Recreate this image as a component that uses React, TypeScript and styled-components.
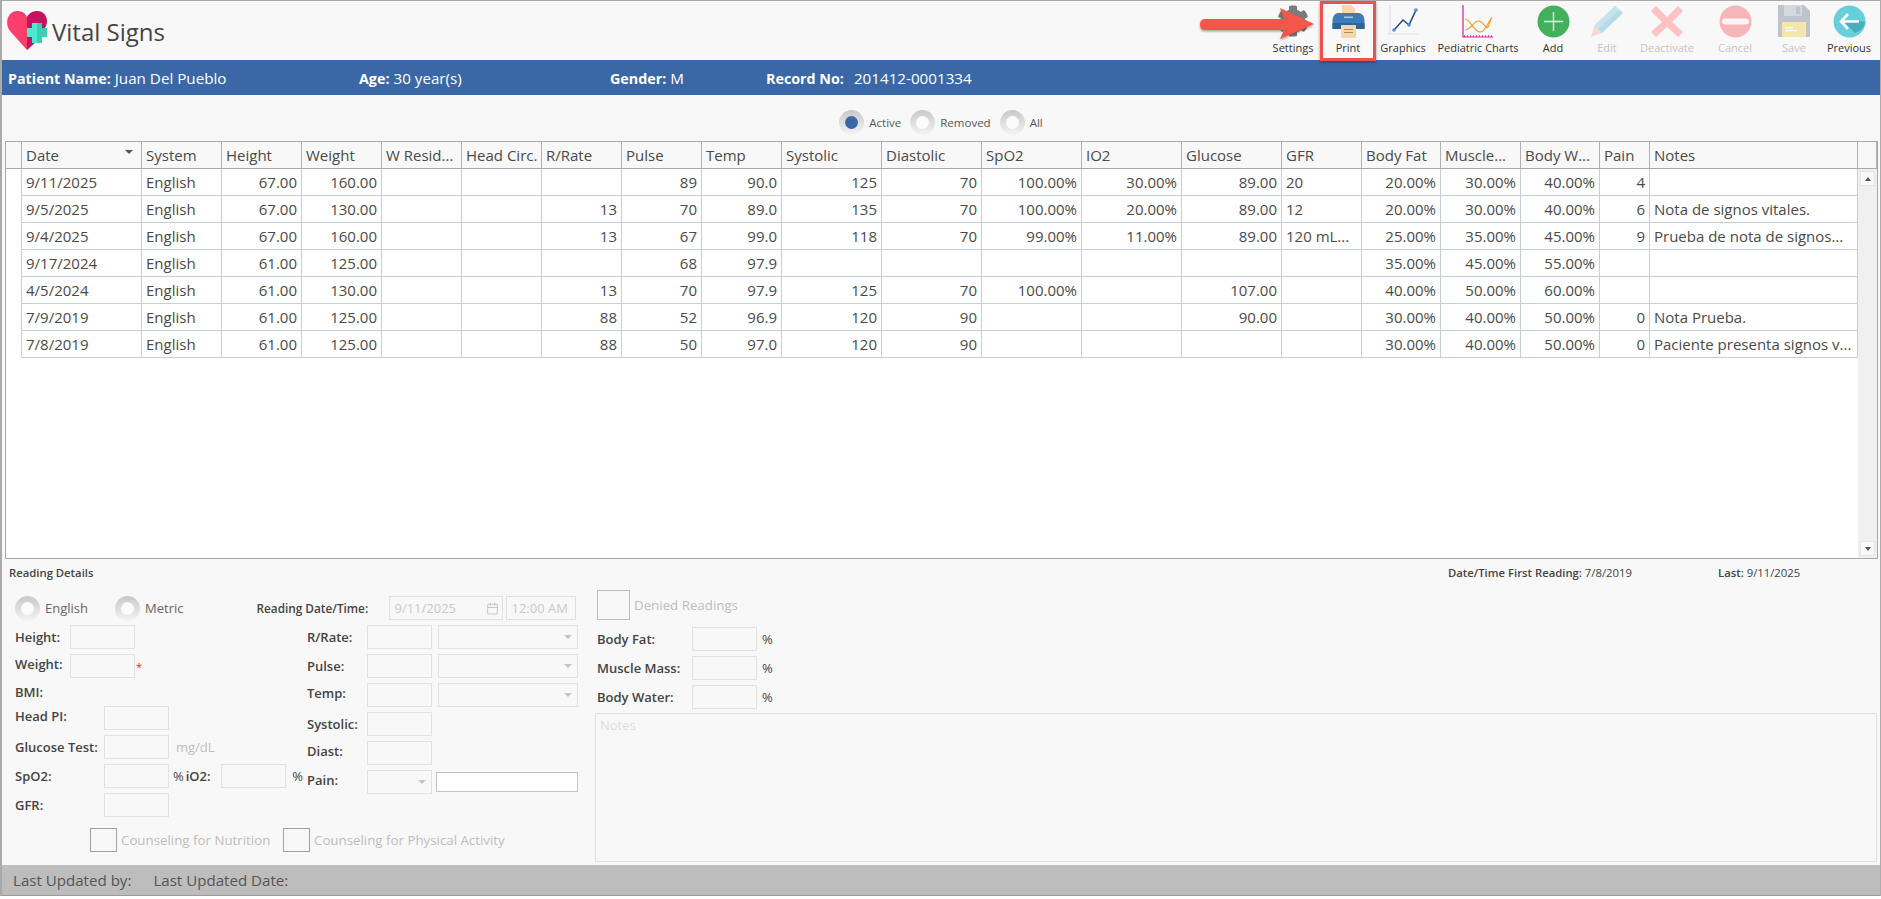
import React from 'react';
import styled, { createGlobalStyle } from 'styled-components';
import { Calendar } from 'lucide-react';
import { FaCog } from 'react-icons/fa';

const GlobalStyle = createGlobalStyle`
  html, body {
    margin: 0;
    padding: 0;
    background: #fff;
  }
  * {
    box-sizing: border-box;
  }
  body {
    font-family: "Open Sans", "Noto Sans", sans-serif;
    color: #444;
  }
`;

const Window = styled.div`
  position: relative;
  width: 1881px;
  height: 896px;
  display: flex;
  flex-direction: column;
  background: #f8f8f8;
  border-top: 1px solid #aaa;
  border-left: 2px solid #aaa;
  border-right: 1px solid #aaa;
  overflow: hidden;
`;

const TopBar = styled.div`
  height: 59px;
  display: flex;
  justify-content: space-between;
`;

const TitleWrap = styled.div`
  display: flex;
  align-items: center;
  gap: 4px;
  padding: 0 0 0 5px;
`;

const PageTitle = styled.div`
  font-size: 24px;
  color: #444;
  line-height: 32px;
  margin-top: 2px;
`;

const Toolbar = styled.div`
  display: flex;
`;

const ToolButton = styled.div<{ $w: number; $off?: boolean; $boxed?: boolean }>`
  width: ${({ $w }) => $w}px;
  height: ${({ $boxed }) => ($boxed ? 60 : 59)}px;
  display: flex;
  flex-direction: column;
  align-items: center;
  font-size: 11px;
  color: ${({ $off }) => ($off ? '#c4c4c4' : '#333')};
  white-space: nowrap;
  ${({ $boxed }) =>
    $boxed &&
    `position: relative;
     z-index: 1;
     box-shadow: inset 0 0 0 3px #ef5148, 0 1px 3px rgba(0,0,0,.4);`}
`;

const ToolIcon = styled.div`
  height: 39px;
  padding-top: 4px;
  display: flex;
  justify-content: center;
`;

const ToolLabel = styled.div`
  line-height: 16px;
`;

const AnnotationArrow = styled.svg`
  position: absolute;
  left: 1194px;
  top: 3px;
  z-index: 2;
`;

const PatientBand = styled.div`
  height: 35px;
  background: #3a68a7;
  color: #fff;
  display: flex;
  align-items: center;
  font-size: 15.2px;
  padding-top: 1px;
`;

const PatientField = styled.div<{ $w: number }>`
  width: ${({ $w }) => $w}px;
  padding-left: 6px;
  white-space: nowrap;
  & b {
    font-size: 14.3px;
    font-weight: 700;
    margin-right: 4px;
  }
`;

const RecordValue = styled.span`
  margin-left: 6px;
`;

const FilterRow = styled.div`
  height: 46px;
  padding-top: 15px;
  display: flex;
  justify-content: center;
  align-items: flex-start;
  font-size: 11.5px;
  color: #555;
`;

const RadioItem = styled.div<{ $ml?: number }>`
  display: flex;
  align-items: center;
  gap: 5px;
  margin-left: ${({ $ml }) => $ml ?? 0}px;
`;

const RadioCircle = styled.div<{ $checked?: boolean }>`
  width: 25px;
  height: 25px;
  border-radius: 50%;
  background: linear-gradient(#c8c8c8, #f4f4f4);
  display: flex;
  align-items: center;
  justify-content: center;
  &::after {
    content: '';
    width: 13px;
    height: 13px;
    border-radius: 50%;
    background: ${({ $checked }) => ($checked ? '#3a68a7' : '#fbfbfb')};
  }
`;

const GridWrap = styled.div`
  margin-left: 3px;
  width: 1873px;
  height: 418px;
  border: 1px solid #a8a8a8;
  background: #fff;
  display: flex;
  flex-direction: column;
  font-size: 15px;
  color: #4a4a4a;
`;

const columns = '16px 120px repeat(8, 80px) repeat(5, 100px) 80px 79px 80px 79px 50px 208px';

const HeaderRow = styled.div`
  display: grid;
  grid-template-columns: ${columns} 19px;
  height: 27px;
  background: #f8f8f8;
  border-bottom: 1px solid #a8a8a8;
  flex-shrink: 0;
`;

const HeaderCell = styled.div`
  border-right: 1px solid #b0b0b0;
  padding: 0 4px;
  line-height: 25px;
  white-space: nowrap;
  overflow: hidden;
  display: flex;
  justify-content: space-between;
  align-items: center;
`;

const SortArrow = styled.span`
  width: 0;
  height: 0;
  border-left: 4px solid transparent;
  border-right: 4px solid transparent;
  border-top: 4px solid #555;
  margin: 0 4px 6px 0;
`;

const GridBody = styled.div`
  flex: 1;
  display: flex;
  min-height: 0;
`;

const Rows = styled.div`
  width: 1852px;
`;

const DataRow = styled.div`
  display: grid;
  grid-template-columns: ${columns};
  height: 27px;
`;

const DataCell = styled.div<{ $right?: boolean }>`
  border-right: 1px solid #c6cedb;
  border-bottom: 1px solid #c6cedb;
  padding: 0 4px;
  line-height: 26px;
  white-space: nowrap;
  overflow: hidden;
  text-align: ${({ $right }) => ($right ? 'right' : 'left')};
`;

const IndicatorCell = styled.div`
  border-right: 1px solid #c6cedb;
`;

const ScrollBar = styled.div`
  width: 19px;
  background: #f0f0f0;
  display: flex;
  flex-direction: column;
  justify-content: space-between;
  align-items: center;
  padding: 2px 0;
`;

const ScrollButton = styled.div<{ $down?: boolean }>`
  width: 15px;
  height: 15px;
  background: #f8f8f8;
  border: 1px solid #e4e4e4;
  display: flex;
  align-items: center;
  justify-content: center;
  &::after {
    content: '';
    border-left: 3px solid transparent;
    border-right: 3px solid transparent;
    ${({ $down }) => ($down ? 'border-top: 4px solid #555;' : 'border-bottom: 4px solid #555;')}
  }
`;

const DetailsHeader = styled.div`
  height: 29px;
  flex-shrink: 0;
  display: flex;
  align-items: center;
  font-size: 11.3px;
  font-weight: 600;
  color: #444;
  padding-bottom: 2px;
`;

const DetailsTitle = styled.div`
  margin-left: 7px;
  width: 1439px;
`;

const StatText = styled.div<{ $w: number }>`
  width: ${({ $w }) => $w}px;
  white-space: nowrap;
  & span {
    font-weight: 400;
  }
`;

const DetailsBody = styled.div`
  flex: 1;
  display: flex;
  padding-left: 13px;
  min-height: 0;
`;

const LeftPane = styled.div`
  width: 580px;
  padding-top: 8px;
  display: flex;
  flex-direction: column;
`;

const TopLine = styled.div`
  height: 24px;
  display: flex;
  align-items: center;
  font-size: 13px;
`;

const UnitRadio = styled(RadioItem)`
  color: #666;
  font-size: 13px;
`;

const ReadingLabel = styled.div`
  margin-left: 73px;
  width: 133px;
  font-weight: 600;
  font-size: 11.8px;
  color: #444;
  white-space: nowrap;
`;

const DateBox = styled.div<{ $w: number }>`
  width: ${({ $w }) => $w}px;
  height: 24px;
  margin-right: 3px;
  border: 1px solid #e0e0e0;
  font-size: 13px;
  color: #c8c8c8;
  display: flex;
  align-items: center;
  justify-content: space-between;
  padding: 0 3px 0 4px;
`;

const FieldColumns = styled.div`
  margin-top: 5px;
  display: flex;
`;

const FieldColumn = styled.div<{ $w: number }>`
  width: ${({ $w }) => $w}px;
  display: flex;
  flex-direction: column;
  gap: 5px;
`;

const FieldRow = styled.div<{ $h?: number }>`
  height: ${({ $h }) => $h ?? 24}px;
  display: flex;
  align-items: center;
  font-size: 13px;
  white-space: nowrap;
`;

const FieldLabel = styled.div<{ $w: number; $up?: boolean }>`
  width: ${({ $w }) => $w}px;
  flex-shrink: 0;
  font-weight: 600;
  color: #444;
  margin-bottom: ${({ $up }) => ($up ? 4 : 0)}px;
`;

const Input = styled.div<{ $w?: number }>`
  width: ${({ $w }) => $w ?? 65}px;
  height: 24px;
  flex-shrink: 0;
  border: 1px solid #e2e2e2;
`;

const ComboBox = styled(Input)<{ $ml?: number }>`
  margin-left: ${({ $ml }) => $ml ?? 6}px;
  display: flex;
  align-items: center;
  justify-content: flex-end;
  padding-right: 5px;
  &::after {
    content: '';
    border-left: 4px solid transparent;
    border-right: 4px solid transparent;
    border-top: 4px solid #c4c4c4;
  }
`;

const PainText = styled.div`
  width: 142px;
  height: 20px;
  margin-left: 4px;
  background: #fff;
  border: 1px solid #c4c4c4;
`;

const Required = styled.span`
  color: #ee2222;
  font-size: 11px;
  margin-left: 1px;
`;

const Unit = styled.span<{ $ml: number; $muted?: boolean }>`
  margin-left: ${({ $ml }) => $ml}px;
  color: ${({ $muted }) => ($muted ? '#bdbdbd' : '#444')};
`;

const InlineLabel = styled.span<{ $w: number }>`
  width: ${({ $w }) => $w}px;
  flex-shrink: 0;
  margin-left: 2px;
  font-weight: 600;
  color: #444;
`;

const CounselRow = styled.div`
  margin-top: 11px;
  padding-left: 75px;
  display: flex;
  align-items: center;
  font-size: 13.3px;
  color: #bdbdbd;
  white-space: nowrap;
`;

const CheckBox = styled.div<{ $w?: number; $h?: number; $c?: string }>`
  width: ${({ $w }) => $w ?? 27}px;
  height: ${({ $h }) => $h ?? 24}px;
  flex-shrink: 0;
  border: 1px solid ${({ $c }) => $c ?? '#a0a0a0'};
  margin-right: 4px;
`;

const CounselText = styled.span<{ $w?: number }>`
  width: ${({ $w }) => ($w ? `${$w}px` : 'auto')};
`;

const RightPane = styled.div`
  flex: 1;
  display: flex;
  flex-direction: column;
  margin-top: 2px;
`;

const DeniedRow = styled.div`
  height: 30px;
  padding-left: 2px;
  display: flex;
  align-items: center;
  font-size: 13.3px;
  color: #bdbdbd;
`;

const BodyFields = styled.div`
  margin-top: 7px;
  padding-left: 2px;
  display: flex;
  flex-direction: column;
  gap: 5px;
`;

const NotesBox = styled.div`
  margin-top: 4px;
  width: 1282px;
  height: 149px;
  border: 1px solid #e2e2e2;
  font-size: 13px;
  color: #dcdcdc;
  padding: 2px 4px;
`;

const Footer = styled.div`
  height: 31px;
  background: #bdbdbd;
  border-bottom: 1px solid #9a9a9a;
  display: flex;
  align-items: center;
  font-size: 15.1px;
  color: #555;
  padding-left: 11px;
  gap: 22px;
  flex-shrink: 0;
`;

const LogoIcon = () => (
  <svg width="41" height="40" viewBox="0 0 41 40">
    <path d="M20 39 L3 20 C-3 12 1 0 10 0 C15 0 18 2 20 6 Z" fill="#fb3f6c" />
    <path d="M20 39 V6 C22 2 26 0 30 0 C38 0 42 8 39 15 L30 30 Z" fill="#c4135f" />
    <path d="M25 12 H30 V32 H25 V26 H20 V17 H25 Z" fill="#4ce8cf" />
    <path d="M30 12 H35 V17 H40 V26 H35 V32 H30 Z" fill="#3fcdb4" />
  </svg>
);

const PrintIcon = () => (
  <svg width="33" height="33" viewBox="0 0 33 33">
    <path d="M10 0 H19 L23 4 V12 H10 Z" fill="#f8d6a8" />
    <path d="M6 8 H27 Q32 9 32.5 15 V24 H0.5 V15 Q1 9 6 8 Z" fill="#3d7cb8" />
    <rect x="0.5" y="18" width="32" height="6" fill="#2f6499" />
    <rect x="12" y="11.5" width="9" height="1.6" fill="#a7cbe6" />
    <rect x="9" y="20" width="15" height="13" fill="#f8d6a8" />
    <rect x="12" y="24" width="9" height="1" fill="#a88c70" />
    <rect x="12" y="27" width="9" height="1" fill="#a88c70" />
  </svg>
);

const GraphicsIcon = () => (
  <svg width="32" height="33" viewBox="0 0 32 33">
    <path d="M3 0 V29 M0 29 H32" stroke="#e2e2e2" strokeWidth="1.2" fill="none" />
    <path d="M7 25 L16 15 L22 20 L29 5" stroke="#2c4a78" strokeWidth="1.6" fill="none" />
    <circle cx="7" cy="25" r="1.8" fill="#4a90e2" />
    <circle cx="22" cy="20" r="1.8" fill="#4a90e2" />
    <circle cx="29" cy="5" r="1.8" fill="#4a90e2" />
  </svg>
);

const PediatricIcon = () => (
  <svg width="32" height="33" viewBox="0 0 32 33">
    <path d="M1 0 V32 H31" stroke="#e8188c" strokeWidth="1.2" fill="none" />
    <path d="M2 31 H30" stroke="#e8188c" strokeWidth="1.5" strokeDasharray="1 2" fill="none" />
    <path d="M3 14 C8 14 12 27 18 27 C24 27 25 18 29 14" stroke="#f59a23" strokeWidth="1.1" fill="none" />
    <path d="M3 25 C9 25 12 15 17 16 C22 17 24 25 26 22 C28 19 28 15 30 12" stroke="#f59a23" strokeWidth="1.1" fill="none" />
  </svg>
);

const AddIcon = () => (
  <svg width="33" height="33" viewBox="0 0 33 33">
    <circle cx="16.5" cy="16.5" r="16" fill="#43b05c" />
    <path d="M16.5 7 V26 M7 16.5 H26" stroke="#dff3e3" strokeWidth="1.4" />
  </svg>
);

const EditIcon = () => (
  <svg width="34" height="33" viewBox="0 0 34 33">
    <path d="M25 1 L33 8 L12 28 L4 21 Z" fill="#b6dae8" />
    <path d="M25 1 L29 4.5 L8 24.5 L4 21 Z" fill="#c7e3ee" />
    <path d="M4 21 L12 28 L1 32 Z" fill="#f4dcd2" />
  </svg>
);

const DeactivateIcon = () => (
  <svg width="32" height="33" viewBox="0 0 32 33">
    <path d="M5 1 L16 12 L27 1 L32 6 L21 17 L32 27 L27 32 L16 22 L5 32 L0 27 L11 17 L0 6 Z" fill="#fdc2c2" />
  </svg>
);

const CancelIcon = () => (
  <svg width="33" height="33" viewBox="0 0 33 33">
    <circle cx="16.5" cy="16.5" r="16" fill="#f4b6b8" />
    <rect x="3" y="13.5" width="27" height="6" rx="3" fill="#fdf3f3" />
  </svg>
);

const SaveIcon = () => (
  <svg width="32" height="33" viewBox="0 0 32 33">
    <path d="M0 0 H26 L32 6 V32 H0 Z" fill="#bfc3cb" />
    <rect x="6" y="0" width="18" height="11" fill="#d5d8dd" />
    <rect x="18" y="2" width="4" height="7" fill="#bfc3cb" />
    <rect x="4" y="17" width="24" height="15" fill="#f5e6ad" />
    <rect x="7" y="22" width="8" height="1.2" fill="#fff" />
    <rect x="7" y="25" width="12" height="1.2" fill="#fff" />
  </svg>
);

const PreviousIcon = () => (
  <svg width="33" height="33" viewBox="0 0 33 33">
    <circle cx="16.5" cy="16.5" r="16" fill="#66cfda" />
    <path d="M10 16 L22 28 A16 16 0 0 0 32.5 17 L26 16 Z" fill="#4aafbd" />
    <path d="M15 9 L8 16.5 L15 24 M8 16.5 H26" stroke="#fff" strokeWidth="2.6" fill="none" />
  </svg>
);

const tools = [
  { label: 'Settings', w: 54, icon: <FaCog size={32} color="#7a7a7a" /> },
  { label: 'Print', w: 56, boxed: true, icon: <PrintIcon /> },
  { label: 'Graphics', w: 54, icon: <GraphicsIcon /> },
  { label: 'Pediatric Charts', w: 96, icon: <PediatricIcon /> },
  { label: 'Add', w: 54, icon: <AddIcon /> },
  { label: 'Edit', w: 54, off: true, icon: <EditIcon /> },
  { label: 'Deactivate', w: 66, off: true, icon: <DeactivateIcon /> },
  { label: 'Cancel', w: 70, off: true, icon: <CancelIcon /> },
  { label: 'Save', w: 48, off: true, icon: <SaveIcon /> },
  { label: 'Previous', w: 62, icon: <PreviousIcon /> },
];

const headers = [
  'Date', 'System', 'Height', 'Weight', 'W Resid...', 'Head Circ.', 'R/Rate', 'Pulse', 'Temp', 'Systolic', 'Diastolic',
  'SpO2', 'IO2', 'Glucose', 'GFR', 'Body Fat', 'Muscle...', 'Body W...', 'Pain', 'Notes',
];

// index of the columns that are left aligned, everything else is numeric
const leftCols = [0, 1, 14, 19];

const rows = [
  ['9/11/2025', 'English', '67.00', '160.00', '', '', '', '89', '90.0', '125', '70', '100.00%', '30.00%', '89.00', '20', '20.00%', '30.00%', '40.00%', '4', ''],
  ['9/5/2025', 'English', '67.00', '130.00', '', '', '13', '70', '89.0', '135', '70', '100.00%', '20.00%', '89.00', '12', '20.00%', '30.00%', '40.00%', '6', 'Nota de signos vitales.'],
  ['9/4/2025', 'English', '67.00', '160.00', '', '', '13', '67', '99.0', '118', '70', '99.00%', '11.00%', '89.00', '120 mL...', '25.00%', '35.00%', '45.00%', '9', 'Prueba de nota de signos...'],
  ['9/17/2024', 'English', '61.00', '125.00', '', '', '', '68', '97.9', '', '', '', '', '', '', '35.00%', '45.00%', '55.00%', '', ''],
  ['4/5/2024', 'English', '61.00', '130.00', '', '', '13', '70', '97.9', '125', '70', '100.00%', '', '107.00', '', '40.00%', '50.00%', '60.00%', '', ''],
  ['7/9/2019', 'English', '61.00', '125.00', '', '', '88', '52', '96.9', '120', '90', '', '', '90.00', '', '30.00%', '40.00%', '50.00%', '0', 'Nota Prueba.'],
  ['7/8/2019', 'English', '61.00', '125.00', '', '', '88', '50', '97.0', '120', '90', '', '', '', '', '30.00%', '40.00%', '50.00%', '0', 'Paciente presenta signos v...'],
];

const App = () => {
  return (
    <>
      <GlobalStyle />
      <Window>
        <TopBar>
          <TitleWrap>
            <LogoIcon />
            <PageTitle>Vital Signs</PageTitle>
          </TitleWrap>
          <Toolbar>
            {tools.map((t) => (
              <ToolButton key={t.label} $w={t.w} $off={t.off} $boxed={t.boxed}>
                <ToolIcon>{t.icon}</ToolIcon>
                <ToolLabel>{t.label}</ToolLabel>
              </ToolButton>
            ))}
          </Toolbar>
        </TopBar>
        <AnnotationArrow width="122" height="40" viewBox="0 0 122 40">
          <defs>
            <filter id="arrowShadow" x="-10%" y="-20%" width="120%" height="150%">
              <feDropShadow dx="0" dy="1.5" stdDeviation="1.2" floodColor="#000" floodOpacity="0.35" />
            </filter>
          </defs>
          <path
            d="M9 15 H88 L84 4 L118 20 L84 35 L88 26 H9 Q4 26 4 20.5 Q4 15 9 15 Z"
            fill="#f4574a"
            filter="url(#arrowShadow)"
          />
        </AnnotationArrow>

        <PatientBand>
          <PatientField $w={351}><b>Patient Name:</b>Juan Del Pueblo</PatientField>
          <PatientField $w={251}><b>Age:</b>30 year(s)</PatientField>
          <PatientField $w={156}><b>Gender:</b>M</PatientField>
          <PatientField $w={400}><b>Record No:</b><RecordValue>201412-0001334</RecordValue></PatientField>
        </PatientBand>

        <FilterRow>
          <RadioItem><RadioCircle $checked />Active</RadioItem>
          <RadioItem $ml={9}><RadioCircle />Removed</RadioItem>
          <RadioItem $ml={9}><RadioCircle />All</RadioItem>
        </FilterRow>

        <GridWrap>
          <HeaderRow>
            <HeaderCell />
            {headers.map((h, i) => (
              <HeaderCell key={h}>
                {h}
                {i === 0 && <SortArrow />}
              </HeaderCell>
            ))}
            <HeaderCell />
          </HeaderRow>
          <GridBody>
            <Rows>
              {rows.map((row) => (
                <DataRow key={row[0]}>
                  <IndicatorCell />
                  {row.map((v, i) => (
                    <DataCell key={i} $right={!leftCols.includes(i)}>{v}</DataCell>
                  ))}
                </DataRow>
              ))}
            </Rows>
            <ScrollBar>
              <ScrollButton />
              <ScrollButton $down />
            </ScrollBar>
          </GridBody>
        </GridWrap>

        <DetailsHeader>
          <DetailsTitle>Reading Details</DetailsTitle>
          <StatText $w={270}>Date/Time First Reading: <span>7/8/2019</span></StatText>
          <StatText $w={100}>Last: <span>9/11/2025</span></StatText>
        </DetailsHeader>

        <DetailsBody>
          <LeftPane>
            <TopLine>
              <UnitRadio><RadioCircle />English</UnitRadio>
              <UnitRadio $ml={27}><RadioCircle />Metric</UnitRadio>
              <ReadingLabel>Reading Date/Time:</ReadingLabel>
              <DateBox $w={114}>9/11/2025<Calendar size={13} color="#c8c8c8" /></DateBox>
              <DateBox $w={70}>12:00 AM</DateBox>
            </TopLine>
            <FieldColumns>
              <FieldColumn $w={292}>
                <FieldRow><FieldLabel $w={55}>Height:</FieldLabel><Input /></FieldRow>
                <FieldRow><FieldLabel $w={55} $up>Weight:</FieldLabel><Input /><Required>*</Required></FieldRow>
                <FieldRow $h={18}><FieldLabel $w={55}>BMI:</FieldLabel></FieldRow>
                <FieldRow><FieldLabel $w={89} $up>Head PI:</FieldLabel><Input /></FieldRow>
                <FieldRow>
                  <FieldLabel $w={89}>Glucose Test:</FieldLabel><Input />
                  <Unit $ml={7} $muted>mg/dL</Unit>
                </FieldRow>
                <FieldRow>
                  <FieldLabel $w={89}>SpO2:</FieldLabel><Input />
                  <Unit $ml={4}>%</Unit>
                  <InlineLabel $w={35.5}>iO2:</InlineLabel><Input />
                  <Unit $ml={6}>%</Unit>
                </FieldRow>
                <FieldRow><FieldLabel $w={89}>GFR:</FieldLabel><Input /></FieldRow>
              </FieldColumn>
              <FieldColumn $w={272}>
                <FieldRow><FieldLabel $w={60}>R/Rate:</FieldLabel><Input /><ComboBox $w={140} /></FieldRow>
                <FieldRow><FieldLabel $w={60}>Pulse:</FieldLabel><Input /><ComboBox $w={140} /></FieldRow>
                <FieldRow><FieldLabel $w={60} $up>Temp:</FieldLabel><Input /><ComboBox $w={140} /></FieldRow>
                <FieldRow><FieldLabel $w={60}>Systolic:</FieldLabel><Input /></FieldRow>
                <FieldRow><FieldLabel $w={60} $up>Diast:</FieldLabel><Input /></FieldRow>
                <FieldRow>
                  <FieldLabel $w={60} $up>Pain:</FieldLabel>
                  <ComboBox $w={65} $ml={0} />
                  <PainText />
                </FieldRow>
              </FieldColumn>
            </FieldColumns>
            <CounselRow>
              <CheckBox />
              <CounselText $w={162}>Counseling for Nutrition</CounselText>
              <CheckBox />
              <CounselText>Counseling for Physical Activity</CounselText>
            </CounselRow>
          </LeftPane>
          <RightPane>
            <DeniedRow>
              <CheckBox $w={33} $h={30} $c="#bbb" />
              Denied Readings
            </DeniedRow>
            <BodyFields>
              <FieldRow><FieldLabel $w={95}>Body Fat:</FieldLabel><Input /><Unit $ml={5}>%</Unit></FieldRow>
              <FieldRow><FieldLabel $w={95}>Muscle Mass:</FieldLabel><Input /><Unit $ml={5}>%</Unit></FieldRow>
              <FieldRow><FieldLabel $w={95}>Body Water:</FieldLabel><Input /><Unit $ml={5}>%</Unit></FieldRow>
            </BodyFields>
            <NotesBox>Notes</NotesBox>
          </RightPane>
        </DetailsBody>

        <Footer>
          <span>Last Updated by:</span>
          <span>Last Updated Date:</span>
        </Footer>
      </Window>
    </>
  );
};

export default App;
